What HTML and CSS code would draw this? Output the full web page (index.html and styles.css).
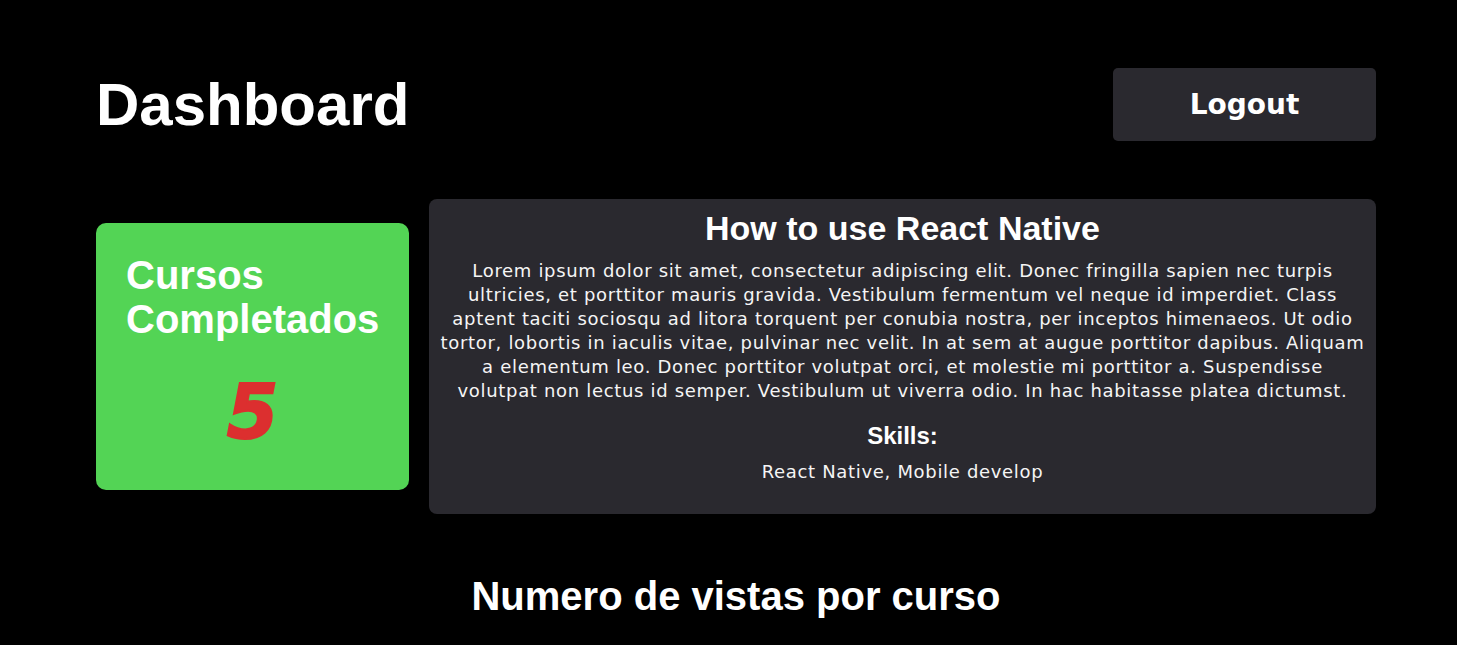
FILE: index.html
```html
<!DOCTYPE html>
<html lang="es">
<head>
<meta charset="utf-8">
<title>Dashboard</title>
<link rel="stylesheet" href="styles.css">
</head>
<body>
<main class="container">
  <header class="header">
    <h1 class="title">Dashboard</h1>
    <button class="logout">Logout</button>
  </header>

  <section class="row">
    <div class="stat-card">
      <h2 class="stat-title">Cursos Completados</h2>
      <div class="stat-value">5</div>
    </div>
    <article class="course-card">
      <h2 class="course-title">How to use React Native</h2>
      <p class="course-desc">Lorem ipsum dolor sit amet, consectetur adipiscing elit. Donec fringilla sapien nec turpis<br>ultricies, et porttitor mauris gravida. Vestibulum fermentum vel neque id imperdiet. Class<br>aptent taciti sociosqu ad litora torquent per conubia nostra, per inceptos himenaeos. Ut odio<br>tortor, lobortis in iaculis vitae, pulvinar nec velit. In at sem at augue porttitor dapibus. Aliquam<br>a elementum leo. Donec porttitor volutpat orci, et molestie mi porttitor a. Suspendisse<br>volutpat non lectus id semper. Vestibulum ut viverra odio. In hac habitasse platea dictumst.</p>
      <h3 class="skills-title">Skills:</h3>
      <p class="skills">React Native, Mobile develop</p>
    </article>
  </section>

  <h2 class="section-title">Numero de vistas por curso</h2>
</main>
</body>
</html>
```
FILE: styles.css
```css
* { box-sizing: border-box; }

html, body {
  margin: 0;
  background: #000000;
  color: #ffffff;
  font-family: "DejaVu Sans", "Liberation Sans", sans-serif;
}

.container {
  width: 1280px;
  margin: 0 81px 0 96px;
  padding-top: 68px;
}

.header {
  display: flex;
  justify-content: space-between;
  align-items: center;
}

.title {
  margin: 0;
  font-family: "Liberation Sans", Arial, sans-serif;
  font-weight: 700;
  font-size: 60px;
  line-height: 69px;
}

.logout {
  width: 263px;
  height: 73px;
  border: none;
  border-radius: 5px;
  background: #2a292f;
  color: #ffffff;
  font-family: "DejaVu Sans", sans-serif;
  font-weight: 700;
  font-size: 28px;
  padding: 0;
}

.row {
  display: flex;
  align-items: center;
  gap: 20px;
  margin-top: 58px;
}

.stat-card {
  width: 313px;
  flex: none;
  background: #53d455;
  border-radius: 10px;
  padding: 30px 30px 41px;
}

.stat-title {
  margin: 0;
  font-family: "Liberation Sans", Arial, sans-serif;
  font-weight: 700;
  font-size: 40px;
  line-height: 44px;
  color: #ffffff;
}

.stat-value {
  margin-top: 34px;
  text-align: center;
  font-family: "DejaVu Sans", sans-serif;
  font-weight: 700;
  font-style: oblique;
  font-size: 74px;
  line-height: 74px;
  color: #dc2f2f;
  -webkit-text-stroke: 2px #dc2f2f;
}

.course-card {
  flex: 1;
  background: #2a292f;
  border-radius: 8px;
  padding: 9px 6px 30px;
  text-align: center;
}

.course-title {
  margin: 0;
  font-family: "Liberation Sans", Arial, sans-serif;
  font-weight: 700;
  font-size: 34px;
  line-height: 40px;
}

.course-desc {
  margin: 11px 0 0;
  font-size: 18px;
  letter-spacing: 0.68px;
  line-height: 24px;
  color: #f5f5f5;
}

.skills-title {
  margin: 19px 0 0;
  font-family: "Liberation Sans", Arial, sans-serif;
  font-weight: 700;
  font-size: 24px;
  line-height: 28px;
}

.skills {
  margin: 10px 0 0;
  font-size: 18px;
  letter-spacing: 0.68px;
  line-height: 24px;
  color: #f5f5f5;
}

.section-title {
  margin: 59px 0 0;
  text-align: center;
  font-family: "Liberation Sans", Arial, sans-serif;
  font-weight: 700;
  font-size: 40px;
  line-height: 46px;
}
```
